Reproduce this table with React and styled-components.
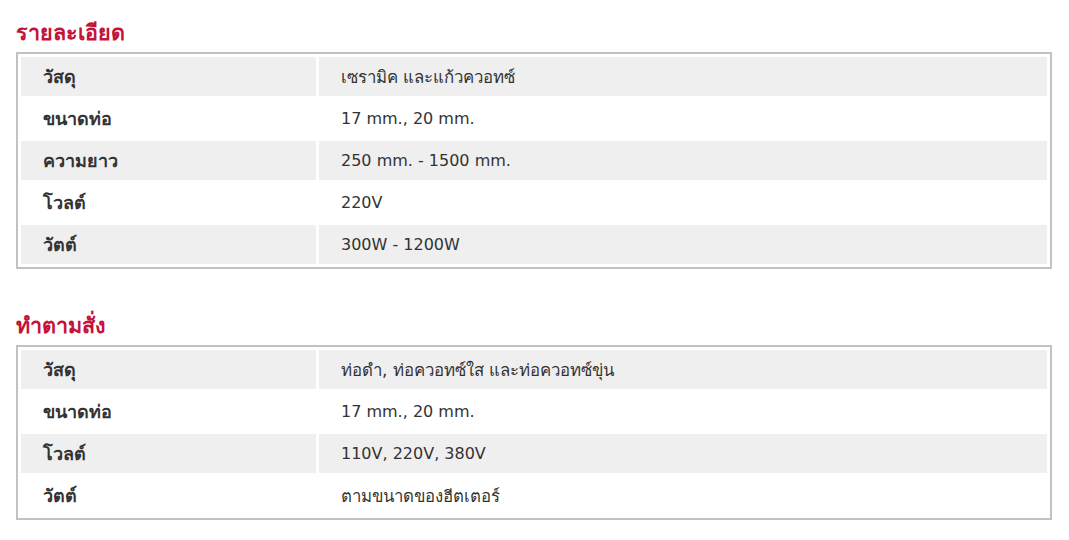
import styled, { createGlobalStyle } from "styled-components";

const GlobalStyle = createGlobalStyle`
  body {
    margin: 0;
    background: #fff;
    font-family: Tahoma, "DejaVu Sans", "Noto Sans", sans-serif;
  }
`;

const details = [
  ["วัสดุ", "เซรามิค และแก้วควอทซ์", true],
  ["ขนาดท่อ", "17 mm., 20 mm."],
  ["ความยาว", "250 mm. - 1500 mm."],
  ["โวลต์", "220V"],
  ["วัตต์", "300W - 1200W"],
];

const custom = [
  ["วัสดุ", "ท่อดำ, ท่อควอทซ์ใส และท่อควอทซ์ขุ่น", true],
  ["ขนาดท่อ", "17 mm., 20 mm."],
  ["โวลต์", "110V, 220V, 380V"],
  ["วัตต์", "ตามขนาดของฮีตเตอร์", true],
];

function Specs({ rows }) {
  return (
    <SpecTable>
      <tbody>
        {rows.map(([label, value, thai], i) => (
          <Row key={label} $shaded={i % 2 === 0}>
            <LabelCell>{label}</LabelCell>
            <ValueCell $thai={thai}>{value}</ValueCell>
          </Row>
        ))}
      </tbody>
    </SpecTable>
  );
}

export default function App() {
  return (
    <>
      <GlobalStyle />
      <Page>
        <Section>
          <Heading>รายละเอียด</Heading>
          <Specs rows={details} />
        </Section>
        <Section>
          <Heading>ทำตามสั่ง</Heading>
          <Specs rows={custom} />
        </Section>
      </Page>
    </>
  );
}

const Page = styled.div`
  display: flex;
  flex-direction: column;
  gap: 44px;
  padding: 20px 17px 0 16px;
`;

const Section = styled.section`
  display: flex;
  flex-direction: column;
  gap: 6px;
`;

const Heading = styled.h3`
  margin: 0;
  font-size: 21.5px;
  line-height: 26px;
  font-weight: bold;
  color: #c4123a;
`;

const SpecTable = styled.table`
  width: 100%;
  border: 2px solid #c2c2c2;
  border-collapse: separate;
  border-spacing: 3px;
  font-size: 16px;
  color: #333;
`;

const Row = styled.tr`
  height: 39px;
  background: ${(p) => (p.$shaded ? "#efefef" : "transparent")};
`;

const LabelCell = styled.td`
  width: 251px;
  padding: 0 22px;
  font-size: 18px;
  font-weight: bold;
`;

const ValueCell = styled.td`
  padding: 0 22px;
  font-size: ${(p) => (p.$thai ? "16.8px" : "16px")};
`;
